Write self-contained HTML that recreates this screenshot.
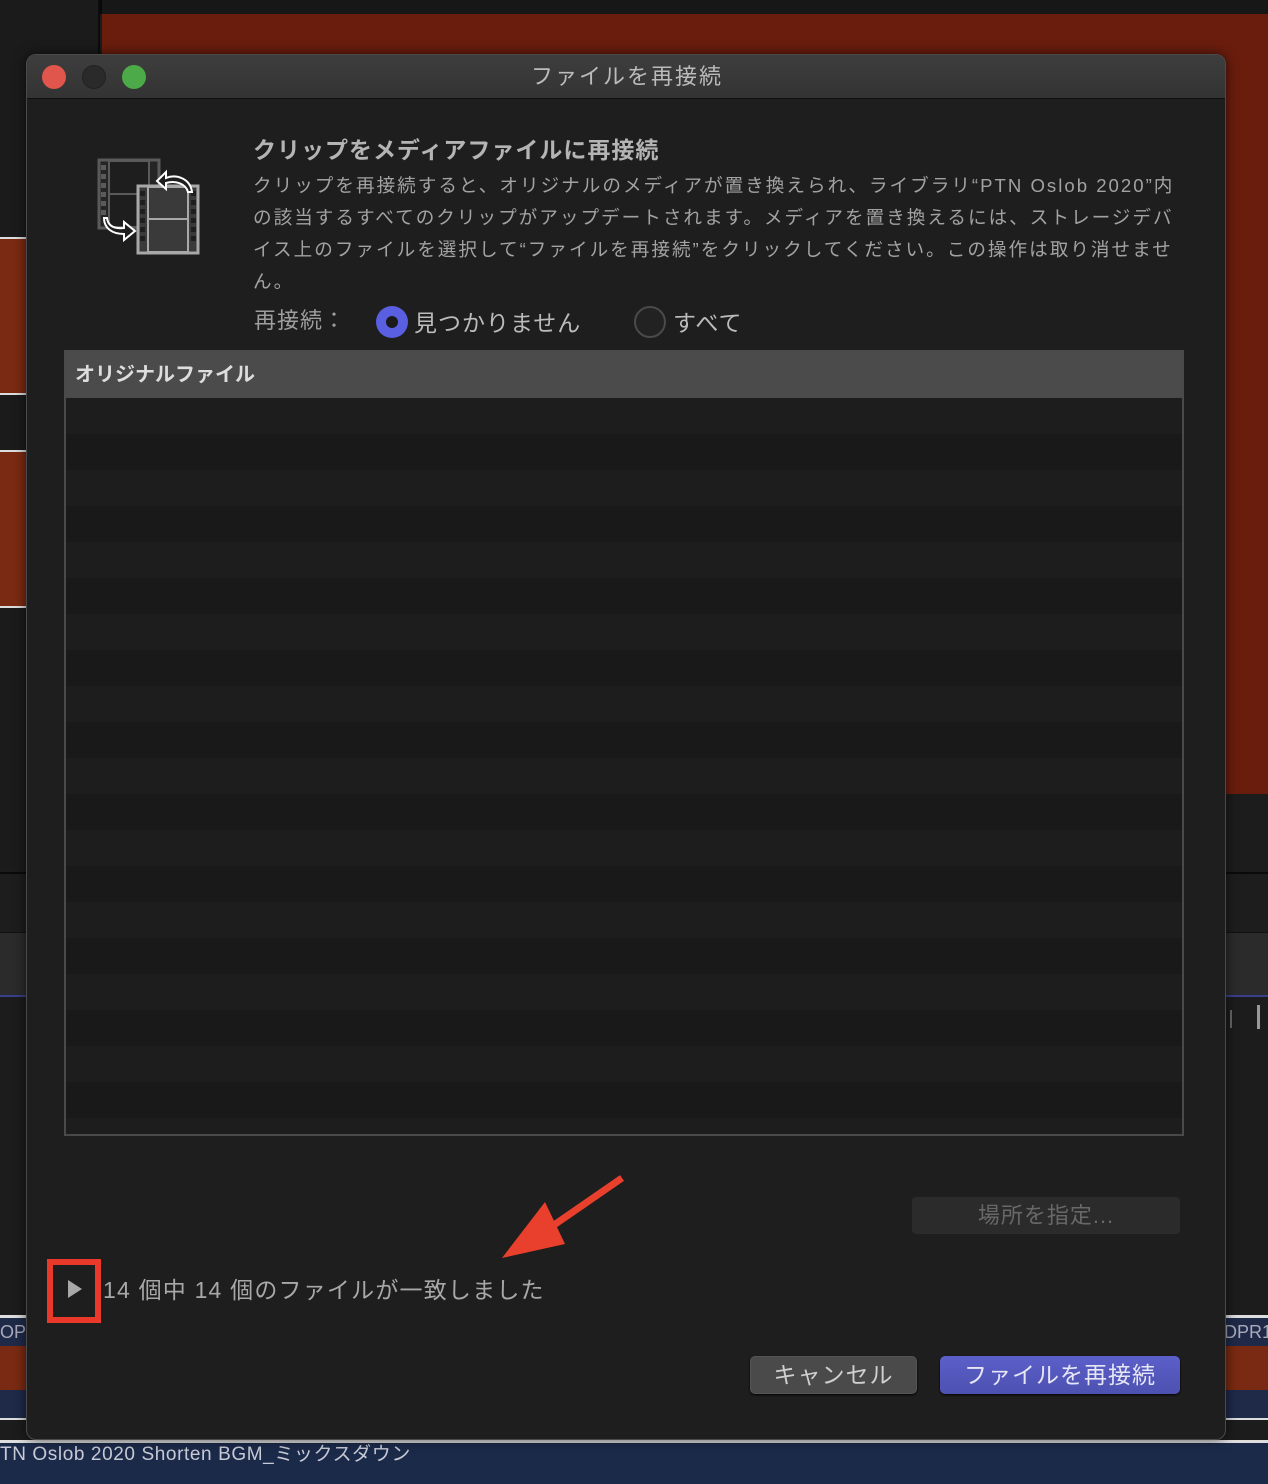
<!DOCTYPE html>
<html><head><meta charset="utf-8"><style>
*{margin:0;padding:0;box-sizing:border-box}
body{width:1268px;height:1484px;background:#1c1c1c;position:relative;overflow:hidden;font-family:"Liberation Sans","Noto Sans CJK JP",sans-serif}
.a{position:absolute}
.jp{font-family:"Liberation Sans","Noto Sans CJK JP",sans-serif;white-space:nowrap}
</style></head><body>
<!-- background -->
<div class="a" style="left:0;top:0;width:1268px;height:14px;background:#171717"></div>
<div class="a" style="left:100px;top:0;width:2px;height:14px;background:#080808"></div>
<div class="a" style="left:102px;top:14px;width:1166px;height:780px;background:#6a1d0d"></div>
<div class="a" style="left:0;top:0;width:100px;height:870px;border-right:2px solid #0c0c0c;background:#1b1b1b"></div>
<div class="a" style="left:0;top:237px;width:26px;height:158px;background:#7a2a12;border-top:2px solid #ddd;border-bottom:2px solid #ddd"></div>
<div class="a" style="left:0;top:450px;width:26px;height:158px;background:#7a2a12;border-top:2px solid #ddd;border-bottom:2px solid #ddd"></div>
<div class="a" style="left:0;top:872px;width:1268px;height:2px;background:#0a0a0a"></div>
<div class="a" style="left:0;top:874px;width:1268px;height:58px;background:#1d1d1d"></div>
<div class="a" style="left:0;top:932px;width:1268px;height:63px;background:#2b2b2b;border-top:1px solid #111"></div>
<div class="a" style="left:0;top:995px;width:1268px;height:2px;background:#3a3f8a"></div>
<div class="a" style="left:1230px;top:1010px;width:2px;height:18px;background:#666"></div>
<div class="a" style="left:1257px;top:1005px;width:3px;height:24px;background:#999"></div>
<div class="a" style="left:0;top:1315px;width:1268px;height:3px;background:#ddd"></div>
<div class="a" style="left:0;top:1318px;width:1268px;height:28px;background:#1e2a48;color:#aab;font-size:18px;line-height:28px"><span style="margin-left:0">OP</span><span class="a" style="left:1224px;top:0">DPR1</span></div>
<div class="a" style="left:0;top:1346px;width:1268px;height:44px;background:#7a2a12"></div>
<div class="a" style="left:0;top:1390px;width:1268px;height:28px;background:#1e2a48"></div>
<div class="a" style="left:0;top:1418px;width:1268px;height:2px;background:#ddd"></div>
<div class="a" style="left:0;top:1440px;width:1268px;height:3px;background:#ddd"></div>
<div class="a jp" style="left:0;top:1443px;width:1268px;height:41px;background:#1c2a4a;color:#c8cbd6;font-size:19px;line-height:24px;letter-spacing:0.6px">TN Oslob 2020 Shorten BGM_ミックスダウン</div>

<!-- dialog -->
<div class="a" style="left:26px;top:54px;width:1200px;height:1386px;background:#1e1e1e;border-radius:10px;border:1px solid #4a4a4a;box-shadow:0 0 12px rgba(0,0,0,.6);overflow:hidden">
  <div class="a" style="left:0;top:0;width:1200px;height:44px;background:linear-gradient(#3e3e3e,#333);border-bottom:1px solid #111"></div>
  <div class="a" style="left:15px;top:10px;width:24px;height:24px;border-radius:50%;background:#e0564c"></div>
  <div class="a" style="left:55px;top:10px;width:24px;height:24px;border-radius:50%;background:#2a2a2a;border:1px solid #222"></div>
  <div class="a" style="left:95px;top:10px;width:24px;height:24px;border-radius:50%;background:#4caa48"></div>
  <div class="a jp" style="left:0;top:8px;width:1200px;text-align:center;color:#bbb;font-size:22px;line-height:28px;letter-spacing:2px">ファイルを再接続</div>
</div>

<!-- icon -->
<svg class="a" style="left:94px;top:156px" width="110" height="100" viewBox="0 0 110 100">
  <rect x="5" y="4" width="60" height="68" fill="#252525" stroke="#5a5a5a" stroke-width="3"/>
  <rect x="15" y="5" width="40" height="66" fill="#1e1e1e" stroke="#5a5a5a" stroke-width="2"/>
  <line x1="15" y1="38" x2="55" y2="38" stroke="#5a5a5a" stroke-width="2"/>
  <g fill="#5a5a5a"><rect x="7" y="9" width="5" height="5"/><rect x="7" y="18" width="5" height="5"/><rect x="7" y="27" width="5" height="5"/><rect x="7" y="36" width="5" height="5"/><rect x="7" y="45" width="5" height="5"/><rect x="7" y="54" width="5" height="5"/></g>
  <rect x="44" y="30" width="60" height="67" fill="#3a3a3a" stroke="#a8a8a8" stroke-width="3"/>
  <rect x="54" y="31" width="40" height="65" fill="#3a3a3a" stroke="#a8a8a8" stroke-width="2"/>
  <line x1="54" y1="63" x2="94" y2="63" stroke="#a8a8a8" stroke-width="2"/>
  <g fill="#1e1e1e"><rect x="46" y="35" width="5" height="5"/><rect x="46" y="44" width="5" height="5"/><rect x="46" y="53" width="5" height="5"/><rect x="46" y="62" width="5" height="5"/><rect x="46" y="71" width="5" height="5"/><rect x="46" y="80" width="5" height="5"/><rect x="97" y="35" width="5" height="5"/><rect x="97" y="44" width="5" height="5"/><rect x="97" y="53" width="5" height="5"/><rect x="97" y="62" width="5" height="5"/><rect x="97" y="71" width="5" height="5"/><rect x="97" y="80" width="5" height="5"/></g>
  <path d="M98 36 C96 22 82 18 72 22 L72 16 L63 25 L72 33 L72 27 C82 24 92 28 94 36Z" fill="#1e1e1e" stroke="#fff" stroke-width="2"/>
  <path d="M10 62 C10 72 18 78 30 78 L30 84 L41 75 L30 66 L30 72 C20 73 14 70 13 62Z" fill="#1e1e1e" stroke="#fff" stroke-width="2"/>
</svg>

<div class="a jp" style="left:253px;top:134px;color:#b4b4b4;font-size:23px;font-weight:bold;line-height:32px;letter-spacing:1px">クリップをメディアファイルに再接続</div>
<div class="a jp" style="left:253px;top:170px;color:#a2a2a2;font-size:18.6px;line-height:32px;letter-spacing:2px">クリップを再接続すると、オリジナルのメディアが置き換えられ、ライブラリ“PTN Oslob 2020”内<br>の該当するすべてのクリップがアップデートされます。メディアを置き換えるには、ストレージデバ<br>イス上のファイルを選択して“ファイルを再接続”をクリックしてください。この操作は取り消せませ<br>ん。</div>

<div class="a jp" style="left:254px;top:306px;color:#9e9e9e;font-size:22px;line-height:30px;letter-spacing:1px">再接続：</div>
<div class="a" style="left:376px;top:306px;width:32px;height:32px;border-radius:50%;background:#5a5ee0"></div>
<div class="a" style="left:386px;top:316px;width:12px;height:12px;border-radius:50%;background:#1a1a1a"></div>
<div class="a jp" style="left:414px;top:308px;color:#bbb;font-size:23px;line-height:30px;letter-spacing:1px">見つかりません</div>
<div class="a" style="left:634px;top:306px;width:32px;height:32px;border-radius:50%;background:#222;border:2px solid #4a4a4a"></div>
<div class="a jp" style="left:673px;top:308px;color:#bbb;font-size:23px;line-height:30px;letter-spacing:1px">すべて</div>

<!-- table -->
<div class="a" style="left:64px;top:350px;width:1120px;height:786px;border:2px solid #4a4a4a;background:repeating-linear-gradient(#1d1d1d 0 36px,#191919 36px 72px) 0 46px / 100% 100% no-repeat,#1d1d1d">
  <div style="height:46px;background:#4b4b4b;color:#ddd;font-size:20px;font-weight:bold;line-height:46px;padding-left:9px" class="jp">オリジナルファイル</div>
</div>

<div class="a jp" style="left:912px;top:1197px;width:268px;height:37px;background:#2b2b2b;border-radius:4px;color:#686868;font-size:22px;line-height:37px;text-align:center;letter-spacing:1px">場所を指定...</div>

<!-- arrow -->
<svg class="a" style="left:495px;top:1170px" width="135" height="95">
  <line x1="127" y1="8" x2="30" y2="75" stroke="#e8402c" stroke-width="7"/>
  <polygon points="7,88 50,32 70,74" fill="#e8402c"/>
</svg>

<div class="a" style="left:47px;top:1259px;width:54px;height:64px;border:6px solid #e8392a"></div>
<div class="a" style="left:68px;top:1280px;width:0;height:0;border-left:14px solid #a8a8a8;border-top:9px solid transparent;border-bottom:9px solid transparent"></div>
<div class="a jp" style="left:103px;top:1274px;color:#a8a8a8;font-size:23px;line-height:32px;letter-spacing:1.2px">14 個中 14 個のファイルが一致しました</div>

<div class="a jp" style="left:750px;top:1356px;width:167px;height:38px;background:#4a4a4a;border-radius:5px;border:1px solid #555;color:#d0d0d0;font-size:23px;line-height:36px;text-align:center;box-shadow:0 1px 2px #000;letter-spacing:1px">キャンセル</div>
<div class="a jp" style="left:940px;top:1356px;width:240px;height:38px;background:linear-gradient(#5b5fc9,#4d51b0);border-radius:5px;color:#e6e6f5;font-size:23px;line-height:38px;text-align:center;box-shadow:0 1px 2px #000;letter-spacing:1px">ファイルを再接続</div>
</body></html>
